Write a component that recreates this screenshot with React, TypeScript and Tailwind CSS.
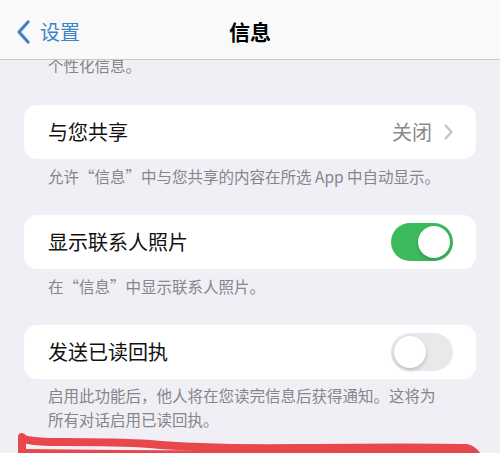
import React from 'react';

const font = { fontFamily: '"Noto Sans CJK SC", "Noto Sans", sans-serif' };

const Toggle = ({ on }: { on: boolean }) => (
  <div
    className={`w-[62px] h-[38px] rounded-full p-[3px] flex ${
      on ? 'bg-[#3dbb5c] justify-end' : 'bg-[#e9e9eb] justify-start'
    }`}
  >
    <div className="w-[32px] h-[32px] rounded-full bg-white shadow-[0_2px_4px_rgba(0,0,0,0.2)]" />
  </div>
);

const Card = ({ children }: { children: React.ReactNode }) => (
  <div className="mx-[24px] h-[54px] rounded-[13px] bg-white flex items-center justify-between pl-[24px] pr-[23px]">
    {children}
  </div>
);

const Caption = ({ children, className = '' }: { children: React.ReactNode; className?: string }) => (
  <p className={`px-[48px] text-[15.5px] leading-[23px] text-[#85858a] ${className}`}>{children}</p>
);

export default function App() {
  return (
    <div className="relative w-[500px] h-[453px] overflow-hidden bg-[#f0eff5] flex flex-col" style={font}>
      {/* nav bar */}
      <div className="h-[60px] shrink-0 pt-[5px] bg-[#f9f9fa] border-b border-[#c9c9cc] flex items-center relative">
        <div className="flex items-center pl-[16px] text-[#3d84c6]">
          <svg width="16" height="24" viewBox="0 0 16 24" fill="none">
            <path d="M12 2 L3 12 L12 22" stroke="currentColor" strokeWidth="3.2" strokeLinecap="round" strokeLinejoin="round" />
          </svg>
          <span className="ml-[8px] text-[20px] leading-none">设置</span>
        </div>
        <div className="absolute left-0 right-0 text-center text-[21px] font-bold text-black pointer-events-none">信息</div>
      </div>

      {/* content */}
      <div className="flex-1 overflow-hidden">
        <Caption className="-mt-[6px]">个性化信息。</Caption>

        <div className="mt-[28px]">
          <Card>
            <span className="text-[20px] text-[#111]">与您共享</span>
            <div className="flex items-center gap-[12px]">
              <span className="text-[20px] text-[#8a8a8e]">关闭</span>
              <svg width="9" height="16" viewBox="0 0 9 16" fill="none">
                <path d="M1.5 1.5 L7.5 8 L1.5 14.5" stroke="#c3c3c7" strokeWidth="2.2" strokeLinecap="round" strokeLinejoin="round" />
              </svg>
            </div>
          </Card>
          <Caption className="mt-[6px]">允许“信息”中与您共享的内容在所选 App 中自动显示。</Caption>
        </div>

        <div className="mt-[27px]">
          <Card>
            <span className="text-[20px] text-[#111]">显示联系人照片</span>
            <Toggle on />
          </Card>
          <Caption className="mt-[6px]">在“信息”中显示联系人照片。</Caption>
        </div>

        <div className="mt-[27px]">
          <Card>
            <span className="text-[20px] text-[#111]">发送已读回执</span>
            <Toggle on={false} />
          </Card>
          <Caption className="mt-[4px] leading-[24px] pr-0">
            启用此功能后，他人将在您读完信息后获得通知。这将为
            <br />
            所有对话启用已读回执。
          </Caption>
        </div>
      </div>

      {/* red hand-drawn mark */}
      <svg className="absolute left-0 bottom-0" width="500" height="20" viewBox="0 0 500 20" fill="none">
        <path
          d="M22 24 L22 4 Q 24 9 60 9 Q 120 9 150 11 Q 200 16 300 15 Q 420 14 466 15 Q 474 17 478 24"
          stroke="#e8474c"
          strokeWidth="8"
          strokeLinecap="round"
          strokeLinejoin="round"
        />
        <path d="M26 16 Q 200 18 470 18 L476 24 L26 24 Z" fill="#e8474c" />
      </svg>
    </div>
  );
}
